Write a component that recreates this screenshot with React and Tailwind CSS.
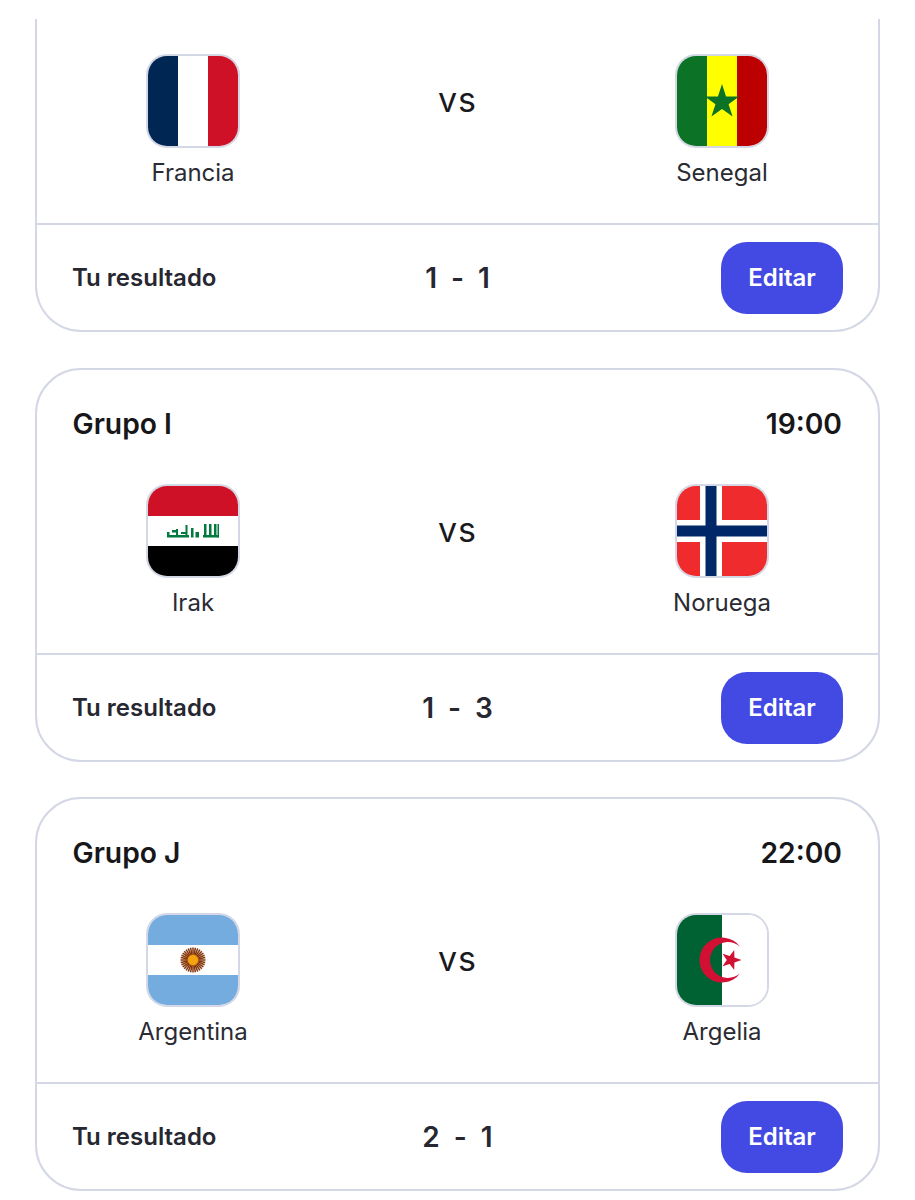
import React from "react";

const starPoints = (cx, cy, R, r, start) =>
  Array.from({ length: 10 })
    .map((_, i) => {
      const a = start + (i * Math.PI) / 5;
      const d = i % 2 === 0 ? R : r;
      return `${(cx + Math.cos(a) * d).toFixed(2)},${(cy + Math.sin(a) * d).toFixed(2)}`;
    })
    .join(" ");

const France = () => (
  <svg viewBox="0 0 90 90" className="block w-full h-full" preserveAspectRatio="none">
    <rect width="30" height="90" fill="#002654" />
    <rect x="30" width="30" height="90" fill="#ffffff" />
    <rect x="60" width="30" height="90" fill="#ce1126" />
  </svg>
);
const Senegal = () => (
  <svg viewBox="0 0 90 90" className="block w-full h-full" preserveAspectRatio="none">
    <rect width="30" height="90" fill="#0b7226" />
    <rect x="30" width="30" height="90" fill="#ffff00" />
    <rect x="60" width="30" height="90" fill="#bc0000" />
    <polygon points={starPoints(45, 46, 18, 6.9, -Math.PI / 2)} fill="#0b7226" />
  </svg>
);
const Iraq = () => (
  <svg viewBox="0 0 90 90" className="block w-full h-full" preserveAspectRatio="none">
    <rect width="90" height="30" fill="#ce1126" />
    <rect y="30" width="90" height="30" fill="#ffffff" />
    <rect y="60" width="90" height="30" fill="#000000" />
    <g fill="#007a3d">
      <rect x="19" y="49" width="22" height="2.5" />
      <rect x="19" y="46" width="2.5" height="4" />
      <rect x="24" y="44" width="4" height="2.5" />
      <rect x="28" y="43" width="2" height="7" />
      <rect x="33" y="46" width="6" height="2" />
      <rect x="37.5" y="39" width="2" height="11" />
      <rect x="43" y="42" width="2.5" height="9.5" />
      <rect x="47.5" y="46" width="3.5" height="5.5" />
      <rect x="55" y="49" width="16" height="2.5" />
      <rect x="56" y="38" width="2.5" height="12" />
      <rect x="61" y="38" width="2.5" height="12" />
      <rect x="66" y="38" width="2.5" height="12" />
      <rect x="69.5" y="38" width="1.5" height="13.5" />
    </g>
  </svg>
);
const Norway = () => (
  <svg viewBox="0 0 90 90" className="block w-full h-full" preserveAspectRatio="none">
    <rect width="90" height="90" fill="#ef2b2d" />
    <rect x="23" width="22" height="90" fill="#ffffff" />
    <rect y="34" width="90" height="22" fill="#ffffff" />
    <rect x="28.5" width="11" height="90" fill="#002868" />
    <rect y="39.5" width="90" height="11" fill="#002868" />
  </svg>
);
const Argentina = () => (
  <svg viewBox="0 0 90 90" className="block w-full h-full" preserveAspectRatio="none">
    <rect width="90" height="90" fill="#74acdf" />
    <rect y="30" width="90" height="30" fill="#ffffff" />
    {Array.from({ length: 32 }).map((_, i) => {
      const a = (i / 32) * Math.PI * 2;
      return (
        <line
          key={i}
          x1={45 + Math.cos(a) * 5}
          y1={45 + Math.sin(a) * 5}
          x2={45 + Math.cos(a) * 12.5}
          y2={45 + Math.sin(a) * 12.5}
          stroke="#85340a"
          strokeWidth="1.5"
        />
      );
    })}
    <circle cx="45" cy="45" r="5.5" fill="#f6a40e" stroke="#a8601a" strokeWidth="0.8" />
  </svg>
);
const Algeria = () => (
  <svg viewBox="0 0 90 90" className="block w-full h-full" preserveAspectRatio="none">
    <rect width="45" height="90" fill="#006233" />
    <rect x="45" width="45" height="90" fill="#ffffff" />
    <path d="M63.2 31.8 A22.5 22.5 0 1 0 63.2 58.2 A18 18 0 1 1 63.2 31.8 Z" fill="#d21034" />
    <polygon points={starPoints(54, 45, 10.5, 4.2, 0)} fill="#d21034" />
  </svg>
);

const Team = ({ name, Flag }) => (
  <div className="w-[240px] flex flex-col items-center">
    <div className="w-[94px] h-[94px] rounded-[21px] border-2 border-[#d4d7e5] overflow-hidden">
      <Flag />
    </div>
    <div className="mt-[9px] text-[24px] leading-[32px] text-[#2a2b33]">{name}</div>
  </div>
);

const Teams = ({ a, b }) => (
  <div className="flex items-start justify-between">
    <Team {...a} />
    <div className="mt-[26px] text-[34px] leading-[40px] tracking-[1px] text-[#1a1a1e]">vs</div>
    <Team {...b} />
  </div>
);

const Footer = ({ score }) => (
  <div className="border-t-2 border-[#d4d7e5] pl-[35px] pr-[35px] pt-[1px] h-[106.5px] flex items-center justify-between">
    <div className="w-[240px] text-[24px] font-semibold text-[#262730]">Tu resultado</div>
    <div className="text-[28px] leading-[36px] font-semibold text-[#262730] flex gap-[14px]">
      {score.map((s, i) => (
        <span key={i}>{s}</span>
      ))}
    </div>
    <div className="w-[240px] flex justify-end">
      <button className="w-[122px] h-[72px] rounded-[26px] bg-[#4349e3] text-white text-[24px] font-semibold">
        Editar
      </button>
    </div>
  </div>
);

const Card = ({ group, time, a, b, score }) => (
  <div className="border-2 border-[#d4d7e5] rounded-[46px] bg-white">
    <div className="pl-[36px] pr-[36px] pt-[36px] pb-[34px]">
      <div className="-ml-[0.5px] flex justify-between text-[28.25px] leading-[36px] font-semibold text-[#17171a] mb-[42px]">
        <span>{group}</span>
        <span>{time}</span>
      </div>
      <Teams a={a} b={b} />
    </div>
    <Footer score={score} />
  </div>
);

export default function App() {
  return (
    <div className="w-[915px] h-[1200px] overflow-hidden bg-white px-[35px] pt-[19px] font-['Inter','Liberation_Sans',sans-serif]">
      <div className="border-2 border-t-0 border-[#d4d7e5] rounded-b-[46px] bg-white">
        <div className="px-[36px] pt-[35px] pb-[34px]">
          <Teams a={{ name: "Francia", Flag: France }} b={{ name: "Senegal", Flag: Senegal }} />
        </div>
        <Footer score={["1", "-", "1"]} />
      </div>
      <div className="mt-[36.5px] flex flex-col gap-[35.5px]">
        <Card
          group="Grupo I"
          time="19:00"
          a={{ name: "Irak", Flag: Iraq }}
          b={{ name: "Noruega", Flag: Norway }}
          score={["1", "-", "3"]}
        />
        <Card
          group="Grupo J"
          time="22:00"
          a={{ name: "Argentina", Flag: Argentina }}
          b={{ name: "Argelia", Flag: Algeria }}
          score={["2", "-", "1"]}
        />
      </div>
    </div>
  );
}
